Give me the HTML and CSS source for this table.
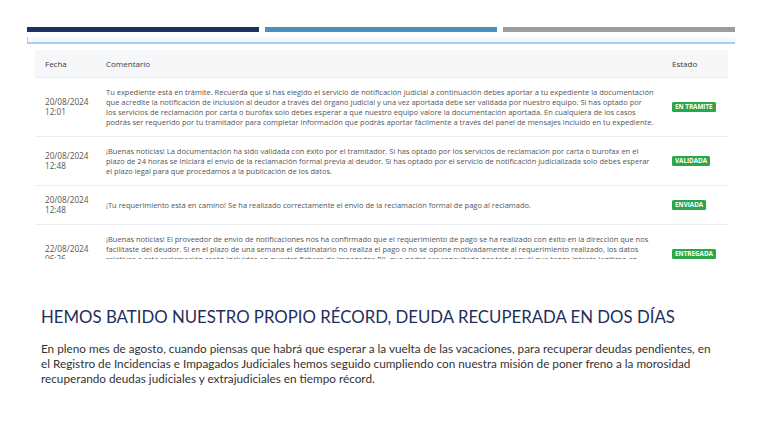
FILE: index.html
```html
<!DOCTYPE html>
<html lang="es">
<head>
<meta charset="utf-8">
<title>Registro de Impagados</title>
<link rel="stylesheet" href="styles.css">
</head>
<body>
<div class="page">
  <div class="bars">
    <div class="bar bar-navy"></div>
    <div class="bar bar-blue"></div>
    <div class="bar bar-gray"></div>
  </div>
  <div class="frame-top"></div>
  <div class="panel">
    <table class="log">
      <thead>
        <tr><th class="c-date">Fecha</th><th class="c-text">Comentario</th><th class="c-state">Estado</th></tr>
      </thead>
      <tbody>
        <tr>
          <td class="c-date">20/08/2024<br>12:01</td>
          <td class="c-text">Tu expediente está en trámite. Recuerda que si has elegido el servicio de notificación judicial a continuación debes aportar a tu expediente la documentación<br>que acredite la notificación de inclusión al deudor a través del órgano judicial y una vez aportada debe ser validada por nuestro equipo. Si has optado por<br>los servicios de reclamación por carta o burofax solo debes esperar a que nuestro equipo valore la documentación aportada. En cualquiera de los casos<br>podrás ser requerido por tu tramitador para completar información que podrás aportar fácilmente a través del panel de mensajes incluido en tu expediente.</td>
          <td class="c-state"><span class="badge">EN TRAMITE</span></td>
        </tr>
        <tr>
          <td class="c-date">20/08/2024<br>12:48</td>
          <td class="c-text">¡Buenas noticias! La documentación ha sido validada con éxito por el tramitador. Si has optado por los servicios de reclamación por carta o burofax en el<br>plazo de 24 horas se iniciará el envío de la reclamación formal previa al deudor. Si has optado por el servicio de notificación judicializada solo debes esperar<br>el plazo legal para que procedamos a la publicación de los datos.</td>
          <td class="c-state"><span class="badge">VALIDADA</span></td>
        </tr>
        <tr>
          <td class="c-date">20/08/2024<br>12:48</td>
          <td class="c-text">¡Tu requerimiento está en camino! Se ha realizado correctamente el envío de la reclamación formal de pago al reclamado.</td>
          <td class="c-state"><span class="badge">ENVIADA</span></td>
        </tr>
        <tr>
          <td class="c-date">22/08/2024<br>06:26</td>
          <td class="c-text">¡Buenas noticias! El proveedor de envío de notificaciones nos ha confirmado que el requerimiento de pago se ha realizado con éxito en la dirección que nos<br>facilitaste del deudor. Si en el plazo de una semana el destinatario no realiza el pago o no se opone motivadamente al requerimiento realizado, los datos<br>relativos a esta reclamación serán incluidos en nuestro fichero de impagados RIJ, que podrá ser consultado por todo aquél que tenga interés legítimo en<br>conocer la situación de solvencia del deudor.</td>
          <td class="c-state"><span class="badge">ENTREGADA</span></td>
        </tr>
      </tbody>
    </table>
  </div>
  <h1 class="title">HEMOS BATIDO NUESTRO PROPIO RÉCORD, DEUDA RECUPERADA EN DOS DÍAS</h1>
  <p class="lead">En pleno mes de agosto, cuando piensas que habrá que esperar a la vuelta de las vacaciones, para recuperar deudas pendientes, en<br>el Registro de Incidencias e Impagados Judiciales hemos seguido cumpliendo con nuestra misión de poner freno a la morosidad<br>recuperando deudas judiciales y extrajudiciales en tiempo récord.</p>
</div>
</body>
</html>
```

FILE: styles.css
```css
* { box-sizing: border-box; }
html, body { margin: 0; padding: 0; background: #ffffff; }
body { font-family: "Open Sans", "Noto Sans", sans-serif; }

.page { padding: 27px 25px 0 27px; width: 760px; }

.bars { display: flex; gap: 6px; height: 5px; }
.bar { flex: 1; height: 5px; }
.bar-navy { background: #1d3461; }
.bar-blue { background: #4a8fbd; }
.bar-gray { background: #9a9ea3; }

.frame-top {
  margin-top: 5px;
  height: 7px;
  background: #f6f9fc;
  border-left: 1px solid #a9cdef;
  border-bottom: 2px solid #a9cdef;
}

.panel {
  padding: 6px 7px 0 8px;
  height: 215px;
  overflow: hidden;
}

.log { width: 100%; border-collapse: collapse; table-layout: fixed; }
.log th {
  background: #f6f7f9;
  height: 27px;
  text-align: left;
  font-weight: 500;
  font-size: 8px;
  color: #3a3a3a;
  padding: 0 10px;
}
.log td {
  border-top: 1px solid #eceef1;
  padding: 9px 10px;
  font-size: 7.5px;
  line-height: 10px;
  color: #555;
  vertical-align: middle;
}
.log .c-date { width: 61px; }
.log .c-text { width: 566px; white-space: nowrap; }
.log .c-state { width: auto; }
.log td.c-date { font-size: 8.2px; }

.badge {
  display: inline-block;
  background: #2aa748;
  color: #fff;
  font-weight: 700;
  font-size: 6.3px;
  line-height: 10px;
  padding: 0 3px;
  border-radius: 1.5px;
}

.title {
  margin: 47px 0 0 14px;
  font-family: "Lato", "Liberation Sans", sans-serif;
  font-weight: 400;
  font-size: 16.8px;
  line-height: 22px;
  color: #1f2f5c;
}

.lead {
  margin: 13px 0 0 14px;
  font-family: "Lato", "Liberation Sans", sans-serif;
  font-size: 11.75px;
  line-height: 15px;
  color: #333;
}
```
